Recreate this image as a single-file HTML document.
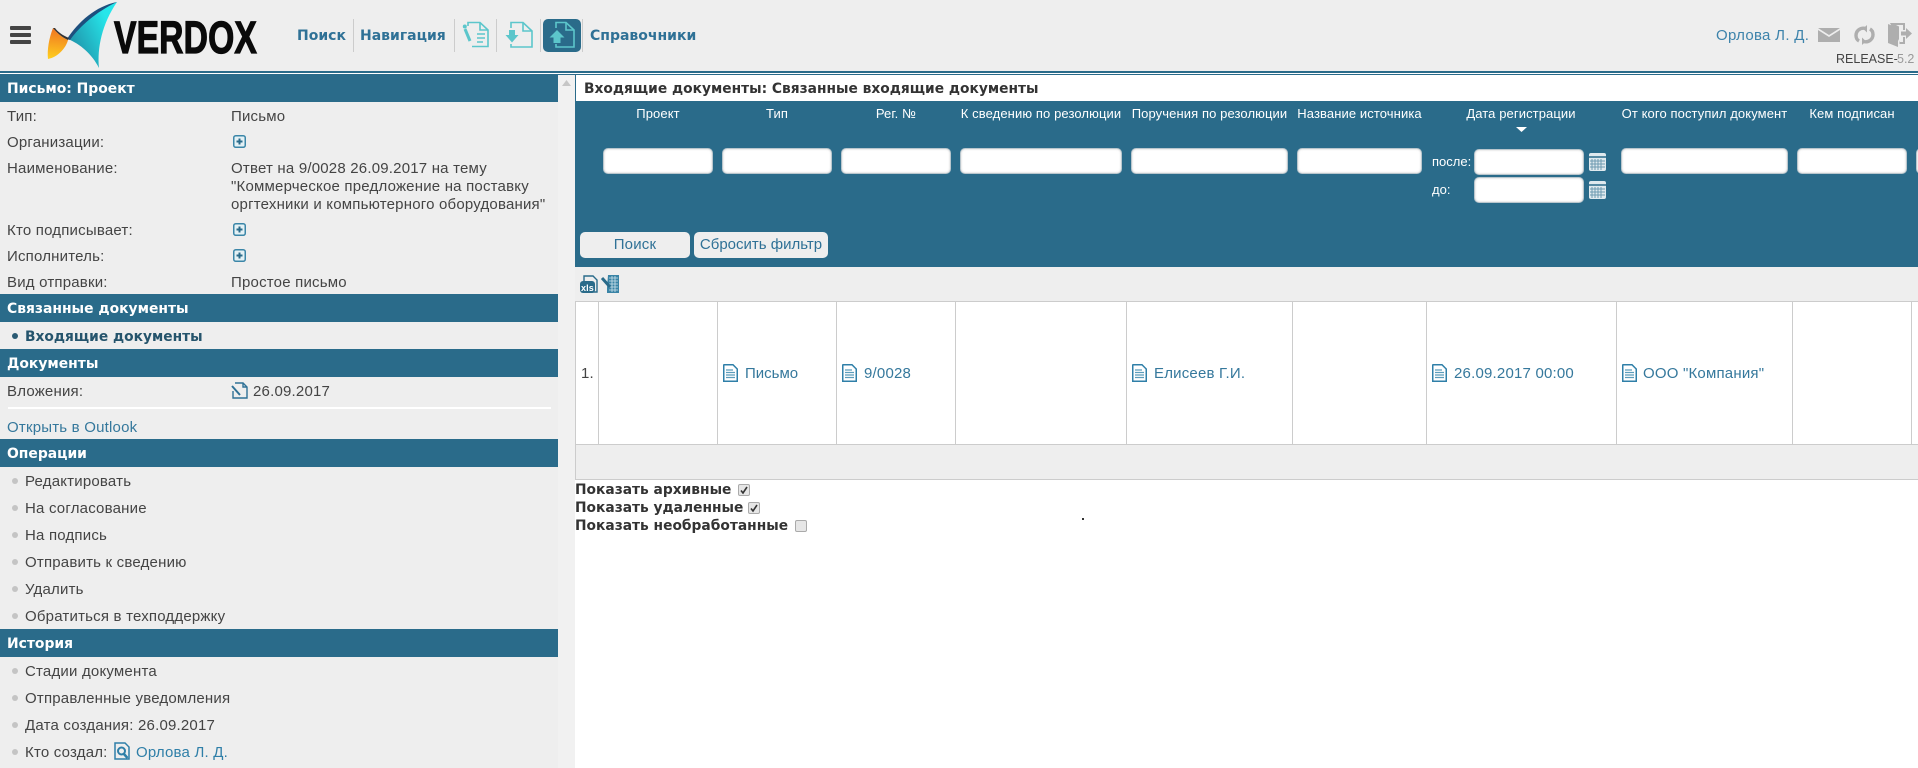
<!DOCTYPE html>
<html lang="ru"><head><meta charset="utf-8"><title>VERDOX</title>
<style>
*{box-sizing:border-box}
html,body{margin:0;padding:0;width:1918px;height:768px;overflow:hidden;background:#fff}
body{position:relative;font-family:"Liberation Sans",sans-serif;font-size:15px;letter-spacing:.2px;color:#444}
.a,.t{position:absolute}
.t{white-space:nowrap;line-height:18px}
.sb .t{margin-top:1px}
.h{position:absolute;left:0;width:558px;height:28px;background:#2a6b8a;color:#fff;font-family:"DejaVu Sans",sans-serif;font-weight:bold;font-size:13.9px;letter-spacing:0;line-height:30px;padding-left:7px}
.d{position:absolute;left:12px;width:6px;height:6px;border-radius:50%;background:#c4c4c4}
.nav{color:#2f7196;font-family:"DejaVu Sans",sans-serif;font-weight:bold;font-size:14px;letter-spacing:0;margin-top:0}
.sep{position:absolute;top:19px;width:1px;height:33px;background:#ccc}
.fh{color:#fff;font-size:13px;letter-spacing:.1px;text-align:center}
.in{position:absolute;height:26px;background:#fff;border:1px solid #b9c6cd;border-radius:5px;box-shadow:inset 0 0 2px #ccc}
.btn{position:absolute;top:232px;height:26px;background:#eee;border-radius:5px;color:#2f7196;font-size:15px;text-align:center;line-height:26px}
.v{position:absolute;top:301px;width:1px;height:144px;background:#ccc}
.l{color:#35789c}
.b{color:#333;font-family:"DejaVu Sans",sans-serif;font-weight:bold;font-size:13.8px;letter-spacing:0}
.cb{position:absolute;width:12px;height:12px;border-radius:2px;background:#e6e6e6;border:1px solid #aaa}
svg{position:absolute;overflow:visible}
</style></head><body>

<!-- top bar -->
<div class="a" style="left:0;top:0;width:1918px;height:71px;background:#eee"></div>
<div class="a" style="left:0;top:71px;width:1918px;height:2px;background:#2a6b8a"></div>
<div class="a" style="left:0;top:74px;width:1918px;height:1px;background:#2a6b8a"></div>

<div class="a" style="left:10px;top:26px;width:21px;height:4px;background:#444;border-radius:1px"></div>
<div class="a" style="left:10px;top:33px;width:21px;height:4px;background:#444;border-radius:1px"></div>
<div class="a" style="left:10px;top:40px;width:21px;height:4px;background:#444;border-radius:1px"></div>

<svg style="left:0;top:0" width="270" height="71" viewBox="0 0 270 71">
<defs>
<linearGradient id="g1" x1="70" y1="50" x2="112" y2="30" gradientUnits="userSpaceOnUse"><stop offset="0" stop-color="#1f8ea6"/><stop offset="1" stop-color="#26e6ea"/></linearGradient>
<linearGradient id="g2" x1="55" y1="30" x2="52" y2="60" gradientUnits="userSpaceOnUse"><stop offset="0" stop-color="#f07a20"/><stop offset="1" stop-color="#ffd21f"/></linearGradient>
</defs>
<path d="M117 2C96 8 78 24 68 39C80 44 92 54 99 68C97 48 102 24 117 2Z" fill="url(#g1)"/>
<path d="M117 2C96 6 78 22 67 39L70 40C80 26 96 12 117 2Z" fill="#1d4f7e"/>
<path d="M53 28C49 38 47 50 48 59C58 57 66 48 68 40C62 37 58 34 53 28Z" fill="url(#g2)"/>
<path d="M53 28C58 34 62 37 68 40L69 38C62 35 58 32 55 28Z" fill="#333"/>
<text x="114" y="53" font-family="Liberation Sans" font-weight="bold" font-size="45" textLength="143" lengthAdjust="spacingAndGlyphs" fill="#0a0a0a" stroke="#0a0a0a" stroke-width="1.2">VERDOX</text>
</svg>

<div class="t nav" style="left:297px;top:27px">Поиск</div>
<div class="sep" style="left:353px"></div>
<div class="t nav" style="left:360px;top:27px">Навигация</div>
<div class="sep" style="left:454px"></div>
<svg style="left:463px;top:21px" width="27" height="27" viewBox="0 0 27 27" fill="none" stroke="#5cc6cb" stroke-width="1.6">
<path d="M5 5V1.5H17L25 9V25.5H9"/><path d="M17 1.5V9H25"/><path d="M14 13H22M14 17H22M14 21H20"/>
<path d="M2 8L7 20" stroke-width="3"/><circle cx="1.8" cy="5.5" r="1.2" fill="#5cc6cb"/>
</svg>
<div class="sep" style="left:496px"></div>
<svg style="left:506px;top:21px" width="27" height="27" viewBox="0 0 27 27" fill="none" stroke="#5cc6cb" stroke-width="1.6">
<path d="M5 7V1.5H17L26 10V26H5V23"/><path d="M17 1.5V10H26"/>
<path d="M3 9H9V14H12.5L6 21.5L-.5 14H3Z" fill="#5cc6cb" stroke="none"/>
</svg>
<div class="sep" style="left:540px"></div>
<div class="a" style="left:543px;top:19px;width:38px;height:33px;background:#2a6b8a;border-radius:5px"></div>
<svg style="left:549px;top:21px" width="27" height="28" viewBox="0 0 27 28" fill="none" stroke="#5cc6cb" stroke-width="1.6">
<path d="M7 7V1.5H17L25 9V26H7V23"/><path d="M17 1.5V9H25"/>
<path d="M8 9L15.500 16.5H11.500V22H4.500V16.5H.5Z" fill="#5cc6cb" stroke="none"/>
</svg>
<div class="sep" style="left:582px"></div>
<div class="t nav" style="left:590px;top:27px">Справочники</div>

<div class="t" style="left:1716px;top:27px;font-size:15px;color:#3d83ab;letter-spacing:.3px">Орлова Л. Д.</div>
<svg style="left:1818px;top:28px" width="22" height="14" viewBox="0 0 22 14"><path d="M0 0H22L11 7Z" fill="#aeaeae"/><path d="M0 2V14H22V2L11 9Z" fill="#aeaeae"/></svg>
<svg style="left:1854px;top:25px" width="21" height="20" viewBox="0 0 21 20" fill="none" stroke="#aeaeae" stroke-width="3.4">
<path d="M12 3.5C6 2 2 6 2 10.5C2 13 3.2 15 5 16"/><path d="M9 16.5C15 18 19 14 19 9.5C19 7 17.8 5 16 4"/>
<path d="M13 0V7.5L9 3.7Z" fill="#aeaeae" stroke="none"/><path d="M8 20V12.500L12 16.300Z" fill="#aeaeae" stroke="none"/>
</svg>
<svg style="left:1888px;top:23px" width="24" height="24" viewBox="0 0 24 24"><path d="M0 1V20L10 24V5Z" fill="#aeaeae"/><path d="M2 0H17V7H15V2H8L11 3.500V19H15V14H17V21H11.500V19Z" fill="#aeaeae"/><path d="M13 8.500H18V5L24 10.500L18 16V12.500H13Z" fill="#aeaeae"/></svg>
<div class="t" style="left:1836px;top:50px;font-size:12.5px;letter-spacing:0;color:#444">RELEASE-</div>
<div class="t" style="left:1897px;top:50px;font-size:12.5px;letter-spacing:0;color:#999">5.2</div>

<!-- sidebar -->
<div class="a" style="left:0;top:75px;width:558px;height:693px;background:#eee"></div>
<div class="a" style="left:558px;top:75px;width:17px;height:693px;background:#f1f1f1"></div>
<svg style="left:562px;top:80px" width="9" height="6" viewBox="0 0 9 6"><path d="M4.500 0L9 6H0Z" fill="#c6c6c6"/></svg>

<div class="sb">
<div class="h" style="top:74px">Письмо: Проект</div>
<div class="t" style="left:7px;top:107px">Тип:</div><div class="t" style="left:231px;top:107px">Письмо</div>
<div class="t" style="left:7px;top:133px">Организации:</div>
<div class="t" style="left:7px;top:159px">Наименование:</div>
<div class="t" style="left:231px;top:159px">Ответ на 9/0028 26.09.2017 на тему<br>"Коммерческое предложение на поставку<br>оргтехники и компьютерного оборудования"</div>
<div class="t" style="left:7px;top:221px">Кто подписывает:</div>
<div class="t" style="left:7px;top:247px">Исполнитель:</div>
<div class="t" style="left:7px;top:273px">Вид отправки:</div><div class="t" style="left:231px;top:273px">Простое письмо</div>
<svg style="left:233px;top:135px" width="13" height="13" viewBox="0 0 13 13"><rect x=".75" y=".75" width="11.500" height="11.500" rx="2" fill="#e4f1f5" stroke="#3b86a8" stroke-width="1.500"/><path d="M3.500 6.500H9.500M6.500 3.500V9.500" stroke="#2a6b8a" stroke-width="2"/></svg>
<svg style="left:233px;top:223px" width="13" height="13" viewBox="0 0 13 13"><rect x=".75" y=".75" width="11.500" height="11.500" rx="2" fill="#e4f1f5" stroke="#3b86a8" stroke-width="1.500"/><path d="M3.500 6.500H9.500M6.500 3.500V9.500" stroke="#2a6b8a" stroke-width="2"/></svg>
<svg style="left:233px;top:249px" width="13" height="13" viewBox="0 0 13 13"><rect x=".75" y=".75" width="11.500" height="11.500" rx="2" fill="#e4f1f5" stroke="#3b86a8" stroke-width="1.500"/><path d="M3.500 6.500H9.500M6.500 3.500V9.500" stroke="#2a6b8a" stroke-width="2"/></svg>

<div class="h" style="top:294px">Связанные документы</div>
<div class="d" style="top:333px;background:#2a5a73"></div>
<div class="t" style="left:25px;top:327px;font-family:'DejaVu Sans',sans-serif;font-size:13.8px;letter-spacing:0;font-weight:bold;color:#25546c">Входящие документы</div>

<div class="h" style="top:349px">Документы</div>
<div class="t" style="left:7px;top:382px">Вложения:</div>
<svg style="left:231px;top:382px" width="17" height="17" viewBox="0 0 17 17" fill="none" stroke="#2f7196" stroke-width="1.400"><path d="M4 1H12L16 5V16H2V9"/><path d="M12 1V5H16"/><path d="M1 4L9 13" stroke-width="2"/></svg>
<div class="t" style="left:253px;top:382px">26.09.2017</div>
<div class="a" style="left:8px;top:407px;width:543px;height:2px;background:#fff"></div>
<div class="t l" style="left:7px;top:418px">Открыть в Outlook</div>

<div class="h" style="top:439px">Операции</div>
<div class="d" style="top:478px"></div><div class="t" style="left:25px;top:472px">Редактировать</div>
<div class="d" style="top:505px"></div><div class="t" style="left:25px;top:499px">На согласование</div>
<div class="d" style="top:532px"></div><div class="t" style="left:25px;top:526px">На подпись</div>
<div class="d" style="top:559px"></div><div class="t" style="left:25px;top:553px">Отправить к сведению</div>
<div class="d" style="top:586px"></div><div class="t" style="left:25px;top:580px">Удалить</div>
<div class="d" style="top:613px"></div><div class="t" style="left:25px;top:607px">Обратиться в техподдержку</div>

<div class="h" style="top:629px">История</div>
<div class="d" style="top:668px"></div><div class="t" style="left:25px;top:662px">Стадии документа</div>
<div class="d" style="top:695px"></div><div class="t" style="left:25px;top:689px">Отправленные уведомления</div>
<div class="d" style="top:722px"></div><div class="t" style="left:25px;top:716px">Дата создания: 26.09.2017</div>
<div class="d" style="top:749px"></div><div class="t" style="left:25px;top:743px">Кто создал:</div>
<svg style="left:114px;top:742px" width="16" height="18" viewBox="0 0 16 18" fill="none" stroke="#2f7fa8" stroke-width="1.500"><path d="M1 1H11L15 5V17H1Z"/><circle cx="7.500" cy="9" r="3.500" stroke-width="2"/><path d="M10 12L13.500 16" stroke-width="2.500"/></svg>
<div class="t" style="left:136px;top:743px;color:#2f7fa8">Орлова Л. Д.</div>
</div>

<!-- right panel -->
<div class="a" style="left:575px;top:75px;width:1343px;height:26px;background:#fff;border-left:1px solid #2a6b8a"></div>
<div class="t b" style="left:584px;top:80px">Входящие документы: Связанные входящие документы</div>
<div class="a" style="left:575px;top:101px;width:1343px;height:166px;background:#2a6b8a"></div>

<div class="t fh" style="left:603px;width:110px;top:105px">Проект</div>
<div class="t fh" style="left:722px;width:110px;top:105px">Тип</div>
<div class="t fh" style="left:841px;width:110px;top:105px">Рег. №</div>
<div class="t fh" style="left:960px;width:162px;top:105px">К сведению по резолюции</div>
<div class="t fh" style="left:1131px;width:157px;top:105px">Поручения по резолюции</div>
<div class="t fh" style="left:1297px;width:125px;top:105px">Название источника</div>
<div class="t fh" style="left:1461px;width:120px;top:105px">Дата регистрации</div>
<svg style="left:1516px;top:127px" width="11" height="5" viewBox="0 0 11 5"><path d="M0 0H11L5.500 5Z" fill="#fff"/></svg>
<div class="t fh" style="left:1621px;width:167px;top:105px">От кого поступил документ</div>
<div class="t fh" style="left:1797px;width:110px;top:105px">Кем подписан</div>

<div class="in" style="left:603px;top:148px;width:110px"></div>
<div class="in" style="left:722px;top:148px;width:110px"></div>
<div class="in" style="left:841px;top:148px;width:110px"></div>
<div class="in" style="left:960px;top:148px;width:162px"></div>
<div class="in" style="left:1131px;top:148px;width:157px"></div>
<div class="in" style="left:1297px;top:148px;width:125px"></div>
<div class="in" style="left:1474px;top:149px;width:110px"></div>
<div class="in" style="left:1474px;top:177px;width:110px"></div>
<div class="in" style="left:1621px;top:148px;width:167px"></div>
<div class="in" style="left:1797px;top:148px;width:110px"></div>
<div class="in" style="left:1916px;top:148px;width:30px"></div>
<div class="t" style="left:1432px;top:153px;color:#fff;font-size:13px;letter-spacing:0">после:</div>
<div class="t" style="left:1432px;top:181px;color:#fff;font-size:13px;letter-spacing:0">до:</div>
<svg style="left:1589px;top:153px" width="17" height="18" viewBox="0 0 17 18"><rect width="17" height="18" rx="2" fill="#dfe9ee"/><path d="M0 4H17" stroke="#2a6b8a" stroke-width="1.500"/><path d="M3 6V17M6 6V17M9 6V17M12 6V17M1 8H16M1 11H16M1 14H16" stroke="#6d9ab0" stroke-width="1"/></svg>
<svg style="left:1589px;top:181px" width="17" height="18" viewBox="0 0 17 18"><rect width="17" height="18" rx="2" fill="#dfe9ee"/><path d="M0 4H17" stroke="#2a6b8a" stroke-width="1.500"/><path d="M3 6V17M6 6V17M9 6V17M12 6V17M1 8H16M1 11H16M1 14H16" stroke="#6d9ab0" stroke-width="1"/></svg>

<div class="btn" style="left:580px;width:110px">Поиск</div>
<div class="btn" style="left:694px;width:134px;letter-spacing:0">Сбросить фильтр</div>

<div class="a" style="left:575px;top:267px;width:1343px;height:34px;background:#eee"></div>
<svg style="left:580px;top:275px" width="18" height="18" viewBox="0 0 18 18"><path d="M4 6V1H13L17 5V17H6" fill="none" stroke="#2a6b8a" stroke-width="1.400"/><rect x="0" y="6" width="15" height="12" rx="3" fill="#2a6b8a"/><text x="1" y="16" font-family="Liberation Sans" font-size="9" font-weight="bold" fill="#fff" textLength="13">xls</text></svg>
<svg style="left:602px;top:275px" width="17" height="18" viewBox="0 0 17 18"><path d="M6 0H17V18H5V13" fill="#3a84a6"/><path d="M7 3H16M7 6H16M7 9H16M7 12H16M7 15H16M10 1V17M13 1V17" stroke="#cfe3ec" stroke-width=".8"/><path d="M0 3L8 12" stroke="#2a6b8a" stroke-width="3"/></svg>

<!-- table -->
<div class="a" style="left:575px;top:301px;width:1343px;height:144px;background:#fff;border-top:1px solid #ccc;border-bottom:1px solid #ccc"></div>
<div class="a" style="left:575px;top:301px;width:1px;height:179px;background:#ccc"></div>
<div class="v" style="left:598px"></div><div class="v" style="left:717px"></div><div class="v" style="left:836px"></div>
<div class="v" style="left:955px"></div><div class="v" style="left:1126px"></div><div class="v" style="left:1292px"></div>
<div class="v" style="left:1426px"></div><div class="v" style="left:1616px"></div><div class="v" style="left:1792px"></div>
<div class="v" style="left:1911px"></div>
<div class="a" style="left:576px;top:445px;width:1342px;height:35px;background:#eee;border-bottom:1px solid #ccc"></div>

<div class="t" style="left:581px;top:365px">1.</div>

<svg style="left:723px;top:364px" width="15" height="18" viewBox="0 0 15 18" fill="none"><path d="M.75 1V17.250H14.250V5L10 .75H1Z" stroke="#2f7fa8" stroke-width="1.500"/><path d="M3 6H10M3 8.500H12M3 11H12M3 13.500H12" stroke="#5b9cbb" stroke-width="1.200"/></svg>
<div class="t l" style="left:745px;top:365px;letter-spacing:0">Письмо</div>
<svg style="left:842px;top:364px" width="15" height="18" viewBox="0 0 15 18" fill="none"><path d="M.75 1V17.250H14.250V5L10 .75H1Z" stroke="#2f7fa8" stroke-width="1.500"/><path d="M3 6H10M3 8.500H12M3 11H12M3 13.500H12" stroke="#5b9cbb" stroke-width="1.200"/></svg>
<div class="t l" style="left:864px;top:365px">9/0028</div>
<svg style="left:1132px;top:364px" width="15" height="18" viewBox="0 0 15 18" fill="none"><path d="M.75 1V17.250H14.250V5L10 .75H1Z" stroke="#2f7fa8" stroke-width="1.500"/><path d="M3 6H10M3 8.500H12M3 11H12M3 13.500H12" stroke="#5b9cbb" stroke-width="1.200"/></svg>
<div class="t l" style="left:1154px;top:365px">Елисеев Г.И.</div>
<svg style="left:1432px;top:364px" width="15" height="18" viewBox="0 0 15 18" fill="none"><path d="M.75 1V17.250H14.250V5L10 .75H1Z" stroke="#2f7fa8" stroke-width="1.500"/><path d="M3 6H10M3 8.500H12M3 11H12M3 13.500H12" stroke="#5b9cbb" stroke-width="1.200"/></svg>
<div class="t l" style="left:1454px;top:365px">26.09.2017 00:00</div>
<svg style="left:1622px;top:364px" width="15" height="18" viewBox="0 0 15 18" fill="none"><path d="M.75 1V17.250H14.250V5L10 .75H1Z" stroke="#2f7fa8" stroke-width="1.500"/><path d="M3 6H10M3 8.500H12M3 11H12M3 13.500H12" stroke="#5b9cbb" stroke-width="1.200"/></svg>
<div class="t l" style="left:1643px;top:365px">ООО "Компания"</div>

<div class="t b" style="left:575px;top:481px">Показать архивные</div>
<div class="cb" style="left:738px;top:484px"></div>
<svg style="left:740px;top:486px" width="8" height="8" viewBox="0 0 8 8"><path d="M1 4.500L3 7L7 1" fill="none" stroke="#333" stroke-width="1.600"/></svg>
<div class="t b" style="left:575px;top:499px">Показать удаленные</div>
<div class="cb" style="left:748px;top:502px"></div>
<svg style="left:750px;top:504px" width="8" height="8" viewBox="0 0 8 8"><path d="M1 4.500L3 7L7 1" fill="none" stroke="#333" stroke-width="1.600"/></svg>
<div class="t b" style="left:575px;top:517px">Показать необработанные</div>
<div class="cb" style="left:795px;top:520px"></div>
<div class="a" style="left:1082px;top:518px;width:2px;height:2px;background:#333"></div>
</body></html>
